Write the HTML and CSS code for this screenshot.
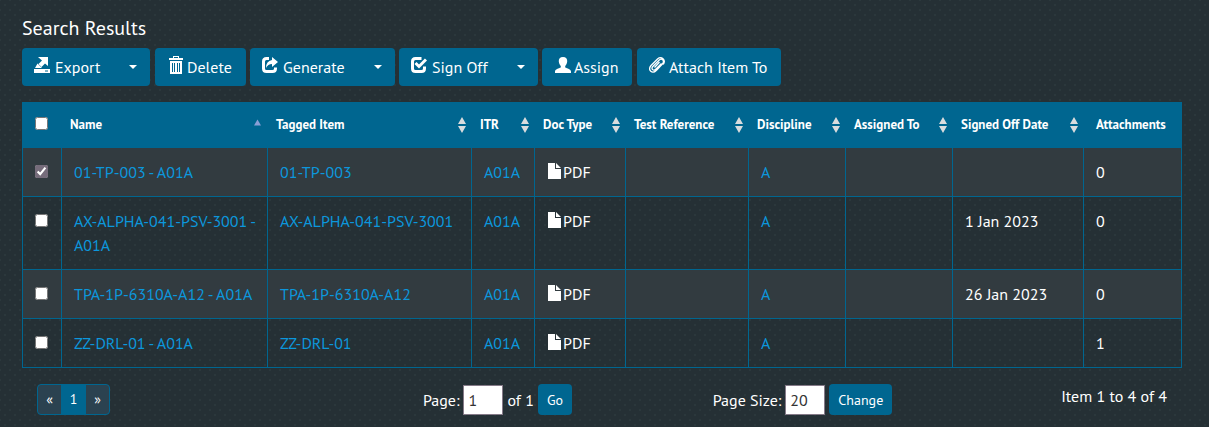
FILE: index.html
```html
<!DOCTYPE html>
<html lang="en">
<head>
<meta charset="utf-8">
<title>Search Results</title>
<link rel="stylesheet" href="styles.css">
</head>
<body>
<svg class="sprite" aria-hidden="true">
  <symbol id="file" viewBox="0 0 13 16"><path d="M0 0h7v6h6v10H0zM8 0l5 5H8z"/></symbol>
  <symbol id="sort" viewBox="0 0 8 16"><path d="M4 0l4 7H0zM0 9h8l-4 7z"/></symbol>
</svg>
<main class="page">
  <h1 class="title">Search Results</h1>
  <div class="toolbar">
    <div class="split export">
      <button class="btn main" type="button"><svg class="icon" viewBox="0 0 16 16"><path d="M4 0h10v9l-3-2.500-3.500 3.500L4.500 7 8 3.500zM3.500 6.500L8 11H1zM0 12h16v4H0z"/><path class="cut" d="M11 13.500h3v1h-3z"/></svg>Export</button><button class="btn toggle" type="button" aria-label="Export options"><span class="caret"></span></button>
    </div>
    <button class="btn delete" type="button"><svg class="icon" viewBox="0 0 16 18"><path fill-rule="evenodd" d="M5 0h6v2h4v2H1V2h4zM6 1v1h4V1zM2 5h12v13H2zM4 7v9h1V7zM6 7v9h1V7zM9 7v9h1V7zM11 7v9h1V7z"/></svg>Delete</button>
    <div class="split generate">
      <button class="btn main" type="button"><svg class="icon" viewBox="0 0 16 16"><path d="M7 1.500H4.500Q1.500 1.500 1.500 4.500v7q0 3 3 3h6q3 0 3-3v-1" class="line"/><path d="M10 0l6 5-6 5V7Q6 7 4 11 4 4 10 3z"/></svg>Generate</button><button class="btn toggle" type="button" aria-label="Generate options"><span class="caret"></span></button>
    </div>
    <div class="split sign">
      <button class="btn main" type="button"><svg class="icon" viewBox="0 0 16 16"><path d="M10.500 1.500H4.500Q1.500 1.500 1.500 4.500v7q0 3 3 3h6q3 0 3-3v-2" class="line"/><path d="M4.500 6L8 9.500l7-7" class="line"/></svg>Sign Off</button><button class="btn toggle" type="button" aria-label="Sign off options"><span class="caret"></span></button>
    </div>
    <button class="btn assign" type="button"><svg class="icon" viewBox="0 0 16 16"><path d="M8 0c3 0 4.500 2 4.200 4.500C12 7 11 8 10.200 9v1.500c2 1 5.800 1.500 5.800 4V16H0v-1.500c0-2.500 3.800-3 5.800-4V9C5 8 4 7 3.800 4.500 3.500 2 5 0 8 0z"/></svg>Assign</button>
    <button class="btn attach" type="button"><svg class="icon" viewBox="0 0 16 16"><path class="thin" d="M12.500 6.500L7 12Q5 14 3.600 12.600T4 9.200L10 3.200Q12 1.400 13.600 2.800T13.800 6.500L7.500 13.200Q4.300 16.500 1.800 14.200T2 8.500L8.500 2Q11.500-.5 14 1.800T14.300 7.500M10.500 5L5.500 10.500"/></svg>Attach Item To</button>
  </div>

  <table class="results">
    <colgroup><col class="c-check"><col class="c-name"><col class="c-item"><col class="c-itr"><col class="c-doc"><col class="c-ref"><col class="c-disc"><col class="c-assigned"><col class="c-date"><col class="c-att"></colgroup>
    <thead>
      <tr>
        <th class="check"><input type="checkbox" aria-label="Select all"></th>
        <th><div class="head">Name<svg class="asc" viewBox="0 0 8 7"><path d="M4 0l4 7H0z"/></svg></div></th>
        <th><div class="head">Tagged Item<svg class="sort"><use href="#sort"/></svg></div></th>
        <th><div class="head">ITR<svg class="sort"><use href="#sort"/></svg></div></th>
        <th><div class="head">Doc Type<svg class="sort"><use href="#sort"/></svg></div></th>
        <th><div class="head">Test Reference<svg class="sort"><use href="#sort"/></svg></div></th>
        <th><div class="head">Discipline<svg class="sort"><use href="#sort"/></svg></div></th>
        <th><div class="head">Assigned To<svg class="sort"><use href="#sort"/></svg></div></th>
        <th><div class="head">Signed Off Date<svg class="sort"><use href="#sort"/></svg></div></th>
        <th class="last">Attachments</th>
      </tr>
    </thead>
    <tbody>
      <tr><td class="check"><input type="checkbox" checked aria-label="Select 01-TP-003"></td><td><a href="#">01-TP-003 - A01A</a></td><td><a href="#">01-TP-003</a></td><td><a href="#">A01A</a></td><td><svg class="file"><use href="#file"/></svg>PDF</td><td></td><td><a href="#">A</a></td><td></td><td></td><td>0</td></tr>
      <tr><td class="check"><input type="checkbox" aria-label="Select AX-ALPHA-041-PSV-3001"></td><td><a href="#">AX-ALPHA-041-PSV-3001 - A01A</a></td><td><a href="#">AX-ALPHA-041-PSV-3001</a></td><td><a href="#">A01A</a></td><td><svg class="file"><use href="#file"/></svg>PDF</td><td></td><td><a href="#">A</a></td><td></td><td>1 Jan 2023</td><td>0</td></tr>
      <tr><td class="check"><input type="checkbox" aria-label="Select TPA-1P-6310A-A12"></td><td><a href="#">TPA-1P-6310A-A12 - A01A</a></td><td><a href="#">TPA-1P-6310A-A12</a></td><td><a href="#">A01A</a></td><td><svg class="file"><use href="#file"/></svg>PDF</td><td></td><td><a href="#">A</a></td><td></td><td>26 Jan 2023</td><td>0</td></tr>
      <tr><td class="check"><input type="checkbox" aria-label="Select ZZ-DRL-01"></td><td><a href="#">ZZ-DRL-01 - A01A</a></td><td><a href="#">ZZ-DRL-01</a></td><td><a href="#">A01A</a></td><td><svg class="file"><use href="#file"/></svg>PDF</td><td></td><td><a href="#">A</a></td><td></td><td></td><td>1</td></tr>
    </tbody>
  </table>

  <div class="footer">
    <nav class="pager" aria-label="Pages"><a href="#">«</a><a href="#" class="current">1</a><a href="#">»</a></nav>
    <form class="group"><label for="page">Page:</label><input id="page" type="text" value="1"><span>of 1</span><button class="btn small" type="button">Go</button></form>
    <form class="group"><label for="size">Page Size:</label><input id="size" type="text" value="20"><button class="btn small" type="button">Change</button></form>
    <div class="count">Item 1 to 4 of 4</div>
  </div>
</main>
</body>
</html>
```
FILE: styles.css
```css
* { box-sizing: border-box; }
body {
  margin: 0;
  color: #fff;
  font: 16px/24px "PT Sans", Lato, sans-serif;
  background-color: #253035;
  background-image: radial-gradient(circle, #2b383c 1px, transparent 1px), radial-gradient(circle, #2b383c 1px, transparent 1px);
  background-size: 10px 10px;
  background-position: 0 0, 5px 5px;
}
.sprite { display: none; }
.page { padding: 16px 27px 8px 22px; }
.title { margin: 0 0 8px; font-size: 20px; font-weight: 400; line-height: 24px; }
.toolbar { display: flex; gap: 4px; margin-bottom: 16px; }
.btn {
  display: flex;
  align-items: center;
  padding: 0 12px;
  height: 38px;
  border: 0;
  border-radius: 4px;
  background: #006690;
  color: #fff;
  font: inherit;
  white-space: nowrap;
}
.split { display: flex; }
.split .main { flex: 1; border-radius: 4px 0 0 4px; }
.split .toggle { padding-right: 13px; border-radius: 0 4px 4px 0; }
.export { width: 128px; margin-right: 1px; }
.delete { width: 91px; }
.generate { width: 145px; }
.sign { width: 139px; }
.assign { width: 90px; margin-right: 1px; }
.attach { width: 144px; }
.icon { width: 16px; height: 16px; margin: 0 4px 4px 0; fill: #fff; flex: none; }
.split .icon { margin-right: 5px; }
.delete .icon { height: 18px; margin-left: 1px; }
.assign .icon, .delete .icon { margin-right: 3px; }
.assign .icon { margin-left: 1px; }
.icon .line { fill: none; stroke: #fff; stroke-width: 3; }
.icon .thin { fill: none; stroke: #fff; stroke-width: 1.3; }
.icon .cut { fill: #006690; }
.caret { border: 4px solid transparent; border-top-color: #fff; border-bottom: 0; }

.results { width: 100%; table-layout: fixed; border-collapse: collapse; }
.c-check { width: 39px; }
.c-name { width: 206px; }
.c-item { width: 204px; }
.c-itr { width: 63px; }
.c-doc { width: 91px; }
.c-ref { width: 123px; }
.c-disc { width: 97px; }
.c-assigned { width: 107px; }
.c-date { width: 131px; }
.c-att { width: 98px; }
th {
  height: 45px;
  padding: 0 5px 0 8px;
  border: 1px solid #006690;
  border-bottom: 0;
  background: #006690;
  font-size: 13px;
  line-height: 20px;
  text-align: left;
  white-space: nowrap;
}
th.last { padding-left: 12px; }
.head { display: flex; align-items: center; justify-content: space-between; }
.sort { width: 8px; height: 16px; fill: #d9dcde; flex: none; }
.asc { width: 7px; height: 7px; margin: 0 1px 6px 0; fill: #8a9fd6; }
td { padding: 12px; border: 1px solid #006690; vertical-align: top; }
tbody tr:nth-child(odd) td { background: #323b40; }
.results .check { padding: 0 12px; }
.check input { display: block; width: 13px; height: 13px; margin: 0 0 4px; accent-color: #766c7b; }
.results td.check { padding-top: 17px; }
a { color: #0c97dc; text-decoration: none; }
.file { width: 13px; height: 16px; margin: 0 2px 0 1px; fill: #fff; vertical-align: -1px; }

.footer {
  display: grid;
  grid-template-columns: 323fr 305fr 305fr 227fr;
  align-items: start;
  padding-top: 16px;
}
.pager {
  display: flex;
  justify-self: start;
  margin-left: 15px;
  border: 1px solid #006690;
  border-radius: 4px;
  background: #2b4250;
  overflow: hidden;
  font-size: 14px;
  line-height: 29px;
  text-align: center;
}
.pager a { width: 23px; color: #fff; }
.pager .current { width: 25px; background: #006690; }
.group { display: flex; align-items: center; justify-content: center; gap: 4px; }
.group input {
  width: 40px;
  height: 30px;
  padding: 0 4px;
  border: 1px solid #857a88;
  background: #fff;
  color: #333;
  font: inherit;
}
.btn.small { height: 31px; padding: 0 9px; font-size: 14px; }
.count { padding-right: 15px; text-align: right; }
```
